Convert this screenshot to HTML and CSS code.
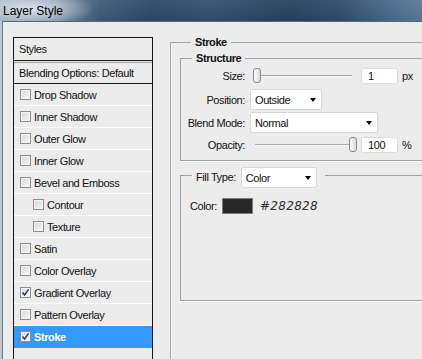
FILE: index.html
```html
<!DOCTYPE html>
<html>
<head>
<meta charset="utf-8">
<link rel="stylesheet" href="styles.css">
</head>
<body>
<div class="window">
  <div class="titlebar"><span class="title">Layer Style</span></div>
  <div class="client">
    <div class="styles-list">
      <div class="list-head">Styles</div>
      <div class="list-blend">Blending Options: Default</div>
      <div class="item"><span class="cb"></span>Drop Shadow</div>
      <div class="item"><span class="cb"></span>Inner Shadow</div>
      <div class="item"><span class="cb"></span>Outer Glow</div>
      <div class="item"><span class="cb"></span>Inner Glow</div>
      <div class="item"><span class="cb"></span>Bevel and Emboss</div>
      <div class="item sub"><span class="cb"></span>Contour</div>
      <div class="item sub"><span class="cb"></span>Texture</div>
      <div class="item"><span class="cb"></span>Satin</div>
      <div class="item"><span class="cb"></span>Color Overlay</div>
      <div class="item"><span class="cb checked"><svg viewBox="0 0 9 9" width="9" height="9"><path d="M1.5 4.5 L3.6 7 L7.6 1.4" fill="none" stroke="#2b3a55" stroke-width="1.4"/></svg></span>Gradient Overlay</div>
      <div class="item"><span class="cb"></span>Pattern Overlay</div>
      <div class="item selected"><span class="cb checked"><svg viewBox="0 0 9 9" width="9" height="9"><path d="M1.5 4.5 L3.6 7 L7.6 1.4" fill="none" stroke="#2b3a55" stroke-width="1.4"/></svg></span>Stroke</div>
    </div>

    <fieldset class="group stroke-group">
      <legend>Stroke</legend>
      <fieldset class="group structure">
        <legend>Structure</legend>
        <div class="row row-size">
          <span class="lbl">Size:</span>
          <div class="slider"><span class="track"></span><span class="thumb thumb-min"></span></div>
          <span class="num">1</span>
          <span class="unit">px</span>
        </div>
        <div class="row row-pos">
          <span class="lbl">Position:</span>
          <div class="select sel-pos"><span>Outside</span><span class="arrow"></span></div>
        </div>
        <div class="row row-blend">
          <span class="lbl">Blend Mode:</span>
          <div class="select sel-blend"><span>Normal</span><span class="arrow"></span></div>
        </div>
        <div class="row row-opacity">
          <span class="lbl">Opacity:</span>
          <div class="slider"><span class="track"></span><span class="thumb thumb-max"></span></div>
          <span class="num">100</span>
          <span class="unit">%</span>
        </div>
      </fieldset>
      <fieldset class="group fill">
        <legend class="fill-legend"><span class="fill-lbl">Fill Type:</span><div class="select sel-fill"><span>Color</span><span class="arrow"></span></div></legend>
        <div class="color-row">
          <span class="color-lbl">Color:</span>
          <span class="swatch"></span>
          <span class="hex">#282828</span>
        </div>
      </fieldset>
    </fieldset>
  </div>
</div>
</body>
</html>
```
FILE: styles.css
```css
html, body {
  margin: 0;
  padding: 0;
}
body {
  width: 422px;
  height: 359px;
  overflow: hidden;
  background: #ececec;
  font-family: "Liberation Sans", Tahoma, Arial, sans-serif;
  font-size: 11px;
  letter-spacing: -0.4px;
  color: #111;
}
.window {
  display: flex;
  flex-direction: column;
  height: 359px;
  background: #bcc8d4;
}
.titlebar {
  height: 21px;
  flex: none;
  display: flex;
  align-items: center;
  padding-left: 3px;
  background:
    radial-gradient(ellipse 62px 18px at 32px 9px, rgba(235,240,245,0.85), rgba(235,240,245,0) 100%),
    linear-gradient(to bottom, rgba(255,255,255,0.06), rgba(0,0,0,0.05)),
    linear-gradient(to right, #9fb0c1 0px, #7a90a7 55px, #3f5b78 100px, #2c4967 150px, #33506e 210px, #27425f 290px, #2f4c6b 340px, #4a6a8a 390px, #5b7b99 422px);
}
.title {
  font-size: 12px;
  letter-spacing: 0;
  color: #000;
}
.client {
  flex: 1;
  min-height: 0;
  display: flex;
  align-items: stretch;
  margin-left: 2px;
  border-left: 1px solid #6e7a86;
  border-top: 1px solid #56667a;
  padding: 15px 0 0 10px;
  background: #ececec;
  overflow: hidden;
}

/* left styles list */
.styles-list {
  width: 138px;
  flex: none;
  border: 1px solid #161616;
  border-bottom: none;
}
.list-head {
  height: 22px;
  line-height: 22px;
  padding-left: 5px;
  border-bottom: 1px solid #161616;
}
.list-blend {
  margin-top: 1px;
  border-top: 1px solid #a4a4a4;
  height: 20px;
  line-height: 20px;
  padding-left: 5px;
  border-bottom: 1px solid #161616;
}
.item {
  height: 21px;
  display: flex;
  align-items: center;
  padding-left: 6px;
  border-bottom: 1px solid #fdfdfd;
}
.item.sub {
  padding-left: 19px;
}
.cb {
  width: 11px;
  height: 11px;
  box-sizing: border-box;
  flex: none;
  margin-right: 3px;
  border: 1px solid #8f8f8f;
  background: linear-gradient(135deg, #d8d8d8, #f6f6f6);
  box-shadow: inset 0 0 0 1px #f4f4f4;
  display: flex;
  align-items: center;
  justify-content: center;
}
.cb svg {
  display: block;
}
.item.selected {
  background: #3399ff;
  color: #fff;
  font-weight: bold;
  border-bottom-color: #3399ff;
}

/* group boxes */
fieldset.group {
  margin: 0;
  padding: 0;
  min-width: 0;
  border: 1px solid #a0a0a0;
  border-right: none;
}
fieldset.group > legend {
  padding: 0 4px;
  margin-left: 11px;
  font-weight: bold;
  line-height: 13px;
}
fieldset.stroke-group {
  flex: 1;
  margin: -1px 0 0 17px;
  padding-left: 9px;
  border-bottom: none;
  box-shadow: inset 1px 0 0 #f8f8f8;
}
fieldset.structure {
  margin-top: 3px;
  padding-bottom: 7px;
  box-shadow: 0 1px 0 #ffffff;
}
.row {
  display: flex;
  align-items: center;
}
.lbl {
  width: 64px;
  flex: none;
  text-align: right;
}
.row-size { height: 16px; margin-top: 3px; }
.row-pos { height: 21px; margin-top: 5px; }
.row-blend { height: 21px; margin-top: 2px; }
.row-opacity { height: 16px; margin-top: 4px; }

.slider {
  position: relative;
  width: 104px;
  height: 16px;
  margin-left: 8px;
  flex: none;
}
.track {
  position: absolute;
  left: 2px;
  right: 5px;
  top: 7px;
  height: 1px;
  background: #a8a8a8;
  border-bottom: 1px solid #fafafa;
}
.thumb {
  position: absolute;
  top: 0;
  width: 8px;
  height: 15px;
  box-sizing: border-box;
  border: 1px solid #8a8a8a;
  border-radius: 3px;
  background: linear-gradient(to right, #fbfbfb, #d9d9d9);
}
.thumb-min { left: 0; }
.thumb-max { left: 96px; }
.num {
  width: 37px;
  height: 16px;
  box-sizing: border-box;
  margin-left: 4px;
  background: #fff;
  border: 1px solid #dcdcdc;
  border-radius: 2px;
  padding-left: 6px;
  line-height: 14px;
}
.unit {
  margin-left: 4px;
}

.select {
  height: 21px;
  box-sizing: border-box;
  background: #fff;
  border: 1px solid #d6d6d6;
  border-radius: 2px;
  display: flex;
  align-items: center;
  justify-content: space-between;
  padding: 0 5px 0 4px;
  font-weight: normal;
}
.arrow {
  width: 0;
  height: 0;
  border-top: 4px solid #000;
  border-left: 3.5px solid transparent;
  border-right: 3.5px solid transparent;
}
.sel-pos { width: 72px; margin-left: 5px; }
.sel-blend { width: 128px; margin-left: 5px; }

fieldset.fill {
  margin-top: 6px;
  padding-bottom: 86px;
  box-shadow: 0 1px 0 #ffffff;
}
fieldset.group > legend.fill-legend {
  display: flex;
  align-items: flex-start;
  height: 16px;
  padding: 0 8px 0 4px;
  font-weight: normal;
  line-height: 21px;
}
.sel-fill {
  width: 76px;
  margin-left: 5px;
  line-height: normal;
}
.color-row {
  display: flex;
  align-items: center;
  height: 16px;
  margin-top: 15px;
  padding-left: 9px;
}
.color-lbl {
  width: 32px;
  flex: none;
}
.swatch {
  width: 31px;
  height: 16px;
  box-sizing: border-box;
  border: 1px solid #7c7c7c;
  background: #282828;
  flex: none;
}
.hex {
  margin-left: 7px;
  font-family: "DejaVu Sans", sans-serif;
  font-style: italic;
  font-size: 12px;
  letter-spacing: 0.3px;
  color: #2c2c2c;
}
```
